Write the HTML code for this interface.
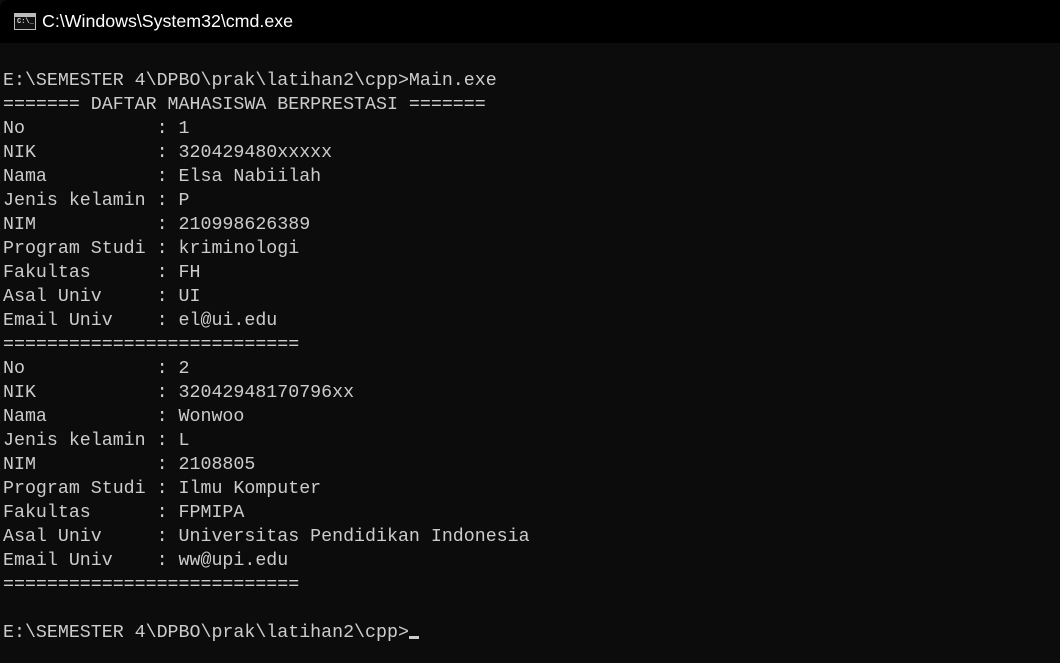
<html><head><style>
body{margin:0;width:1060px;height:663px;background:#0c0c0c;overflow:hidden;position:relative}
.t{position:absolute;left:0;top:0;width:1060px;height:43px;background:#000;border-top-left-radius:8px}
.tt{position:absolute;left:42px;top:11px;color:#fff;font:17.8px "Liberation Sans",sans-serif}
.ic{position:absolute;left:14px;top:13px;width:20px;height:15px;border:1px solid #bbb;background:#111}
.ic:before{content:"";position:absolute;left:0;top:0;right:0;height:3px;background:#bbb}
.ic span{position:absolute;left:2px;top:4px;color:#ddd;font:bold 7px "Liberation Mono",monospace}
pre{position:absolute;left:3px;top:45px;margin:0;color:#cccccc;font:18.3px/24px "Liberation Mono",monospace}
.c{display:inline-block;width:10px;height:3px;background:#ccc;vertical-align:-2px}
</style></head><body>
<div class="t"><div class="ic"><span>C:\_</span></div><div class="tt">C:\Windows\System32\cmd.exe</div></div>
<pre>

E:\SEMESTER 4\DPBO\prak\latihan2\cpp>Main.exe
======= DAFTAR MAHASISWA BERPRESTASI =======
No            : 1
NIK           : 320429480xxxxx
Nama          : Elsa Nabiilah
Jenis kelamin : P
NIM           : 210998626389
Program Studi : kriminologi
Fakultas      : FH
Asal Univ     : UI
Email Univ    : el@ui.edu
===========================
No            : 2
NIK           : 32042948170796xx
Nama          : Wonwoo
Jenis kelamin : L
NIM           : 2108805
Program Studi : Ilmu Komputer
Fakultas      : FPMIPA
Asal Univ     : Universitas Pendidikan Indonesia
Email Univ    : ww@upi.edu
===========================

E:\SEMESTER 4\DPBO\prak\latihan2\cpp><span class="c"></span></pre>
</body></html>
